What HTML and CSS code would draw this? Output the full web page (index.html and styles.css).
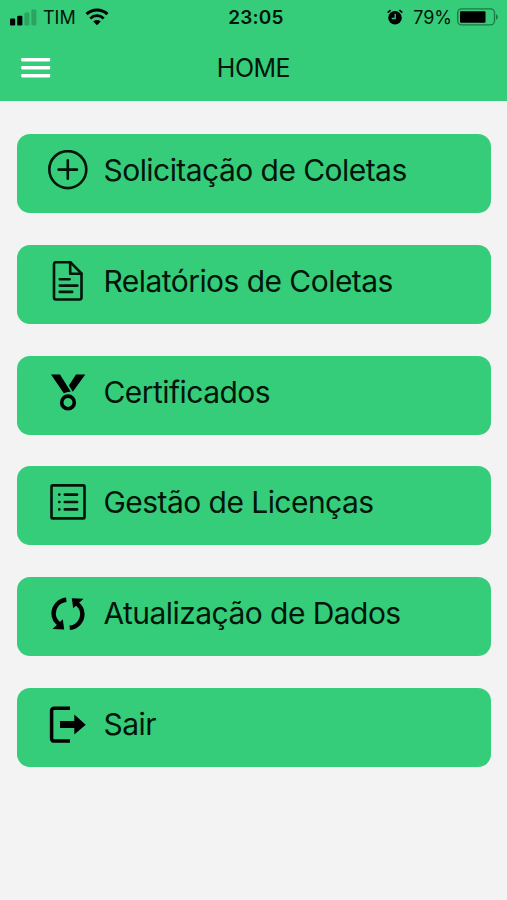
FILE: index.html
```html
<!DOCTYPE html>
<html lang="pt-BR">
<head>
  <meta charset="UTF-8" />
  <meta name="viewport" content="width=device-width, initial-scale=1.0"/>
  <title>Home</title>
  <link rel="stylesheet" href="styles.css">
</head>
<body>

<header>
  <div class="status-bar">
    <div class="status-left">
      <svg class="signal" width="27" height="17" viewBox="0 0 27 17">
        <rect x="0" y="9.5" width="5.2" height="7" rx="1.3"/>
        <rect x="7.2" y="6.8" width="5.2" height="9.7" rx="1.3"/>
        <rect class="off" x="14.4" y="3.6" width="5" height="12.9" rx="1.3"/>
        <rect class="off" x="21.4" y="0.5" width="5" height="16" rx="1.3"/>
      </svg>
      <span class="carrier">TIM</span>
      <svg class="wifi" width="24" height="18" viewBox="0 0 24 18">
        <path d="M1.6 6.2a15 15 0 0 1 20.8 0" fill="none" stroke="#000" stroke-width="3"/>
        <path d="M5.3 10.4a9.7 9.7 0 0 1 13.4 0" fill="none" stroke="#000" stroke-width="2.8"/>
        <path d="M8.3 13.4a5.4 5.4 0 0 1 7.4 0L12 17.2z"/>
      </svg>
    </div>
    <span class="clock">23:05</span>
    <div class="status-right">
      <svg class="alarm" width="16" height="17" viewBox="0 0 16 17">
        <circle cx="8" cy="8.8" r="6.8"/>
        <path d="M.7 3.6 3.6 1.1M15.3 3.6l-2.9-2.5" stroke="#000" stroke-width="1.7"/>
        <path class="cut" d="M8.2 4.8v4.7H4.7" stroke-width="1.3"/>
      </svg>
      <span class="percent">79%</span>
      <svg class="battery" width="41" height="18" viewBox="0 0 41 18">
        <rect x=".7" y=".9" width="36.8" height="16" rx="4" fill="none" stroke="#1f7948" stroke-width="1.4"/>
        <rect x="3" y="3.2" width="25.5" height="11.6" rx="1"/>
        <path d="M39 6.2q2 .8 2 2.8t-2 2.8z" fill="#1f7948"/>
      </svg>
    </div>
  </div>
  <nav>
    <button class="menu-btn" aria-label="Menu">
      <svg width="30" height="20" viewBox="0 0 30 20">
        <rect x=".2" y="0" width="29" height="3.4" rx=".8"/>
        <rect x=".2" y="8" width="29" height="3.4" rx=".8"/>
        <rect x=".2" y="16" width="29" height="3.4" rx=".8"/>
      </svg>
    </button>
    <h1>HOME</h1>
  </nav>
</header>

<main>
  <a class="card solicitacao">
    <svg class="icon line" viewBox="0 0 40 40">
      <circle cx="19.8" cy="19.6" r="18.5"/>
      <path d="M19.8 10.4v18.4M10.6 19.6H29"/>
    </svg>
    <span>Solicitação de Coletas</span>
  </a>

  <a class="card relatorios">
    <svg class="icon line" viewBox="0 0 40 40">
      <path d="M8 1.2h14.3l11.2 11.3v24a2 2 0 0 1-2 2H8a2 2 0 0 1-2-2V3.2a2 2 0 0 1 2-2z"/>
      <path d="M22.2 1.4v11.3h11.2M11.8 18.2h9.8M11.8 24.6h17.6M11.8 30.9h12.4"/>
    </svg>
    <span>Relatórios de Coletas</span>
  </a>

  <a class="card certificados">
    <svg class="icon" viewBox="0 0 40 40">
      <path d="M3 2.4H12l10.8 17.4q-4-.2-7 1.5zM28 2.4h9.3L24.8 19.7 20.9 13.6z"/>
      <circle cx="20" cy="30.4" r="6.3" fill="none" stroke="#000" stroke-width="3.6"/>
    </svg>
    <span>Certificados</span>
  </a>

  <a class="card licencas">
    <svg class="icon line" viewBox="0 0 40 40">
      <rect x="3.5" y="3.4" width="33" height="33" rx="1.2"/>
      <path d="M16.8 12.6h12.3M16.8 20h12.3M16.8 27.4h12.3M11.2 12.6h.2M11.2 20h.2M11.2 27.4h.2"/>
    </svg>
    <span>Gestão de Licenças</span>
  </a>

  <a class="card atualizacao">
    <svg class="icon" viewBox="0 0 40 40">
      <path d="M18.3 6.8C10.6 7.6 5.6 13.6 5.6 20.6c0 4.4 2.3 8.2 6 10.8M21.7 34.8C29.4 34 34.4 28 34.4 21c0-4.4-2.3-8.2-6-10.8" fill="none" stroke="#000" stroke-width="4.4"/>
      <path d="M4.5 35.9 16.2 36.4 14.8 26.3zM35.5 5.7 23.8 5.2l1.4 10.1z"/>
    </svg>
    <span>Atualização de Dados</span>
  </a>

  <a class="card sair">
    <svg class="icon" viewBox="0 0 40 40">
      <path d="M22 4.3H6a2.4 2.4 0 0 0-2.4 2.4v28A2.4 2.4 0 0 0 6 37.1h16" fill="none" stroke="#000" stroke-width="3.5"/>
      <path d="M12 17h14.3v-6.4l11.4 10.1-11.4 9.8V24H12z"/>
    </svg>
    <span>Sair</span>
  </a>
</main>

</body>
</html>
```
FILE: styles.css
```css
* {
  box-sizing: border-box;
}

body {
  margin: 0;
  min-height: 100vh;
  font-family: Inter, "Liberation Sans", sans-serif;
  background-color: #f3f3f3;
  color: #01150a;
}

header {
  height: 101px;
  background-color: #35cd79;
}

.status-bar {
  display: grid;
  grid-template-columns: 1fr auto 1fr;
  align-items: center;
  height: 34px;
  padding: 0 9px 0 10px;
  font-size: 18px;
}

.status-left,
.status-right {
  display: flex;
  align-items: center;
}

.status-right {
  justify-content: flex-end;
}

.signal .off {
  fill: #2ba362;
}

.carrier {
  margin-left: 6px;
}

.wifi {
  margin-left: 9px;
}

.clock {
  padding-left: 4px;
  font-weight: 600;
  font-size: 19px;
  letter-spacing: 0.2px;
}

.alarm .cut {
  fill: none;
  stroke: #35cd79;
}

.percent {
  margin-left: 10px;
}

.battery {
  margin-left: 5px;
}

nav {
  display: grid;
  grid-template-columns: 60px 1fr 60px;
  align-items: center;
  height: 67px;
}

.menu-btn {
  display: flex;
  padding: 0 0 0 21px;
  border: none;
  background: none;
  fill: #fff;
  cursor: pointer;
}

h1 {
  margin: 0;
  font-size: 25px;
  font-weight: 400;
  letter-spacing: -0.5px;
  text-align: center;
}

main {
  display: flex;
  flex-direction: column;
  gap: 31.8px;
  padding: 33px 16px 0 16.5px;
}

.card {
  display: flex;
  align-items: flex-start;
  height: 79px;
  padding: 16px 0 0 31.5px;
  border-radius: 13px;
  background-color: #35cd79;
  font-size: 30px;
  line-height: 40px;
  letter-spacing: -0.55px;
  white-space: nowrap;
}

.icon {
  width: 40px;
  height: 40px;
  margin-right: 15.5px;
}

.line {
  fill: none;
  stroke: #01150a;
  stroke-width: 2.6;
  stroke-linecap: round;
  stroke-linejoin: round;
}
```
